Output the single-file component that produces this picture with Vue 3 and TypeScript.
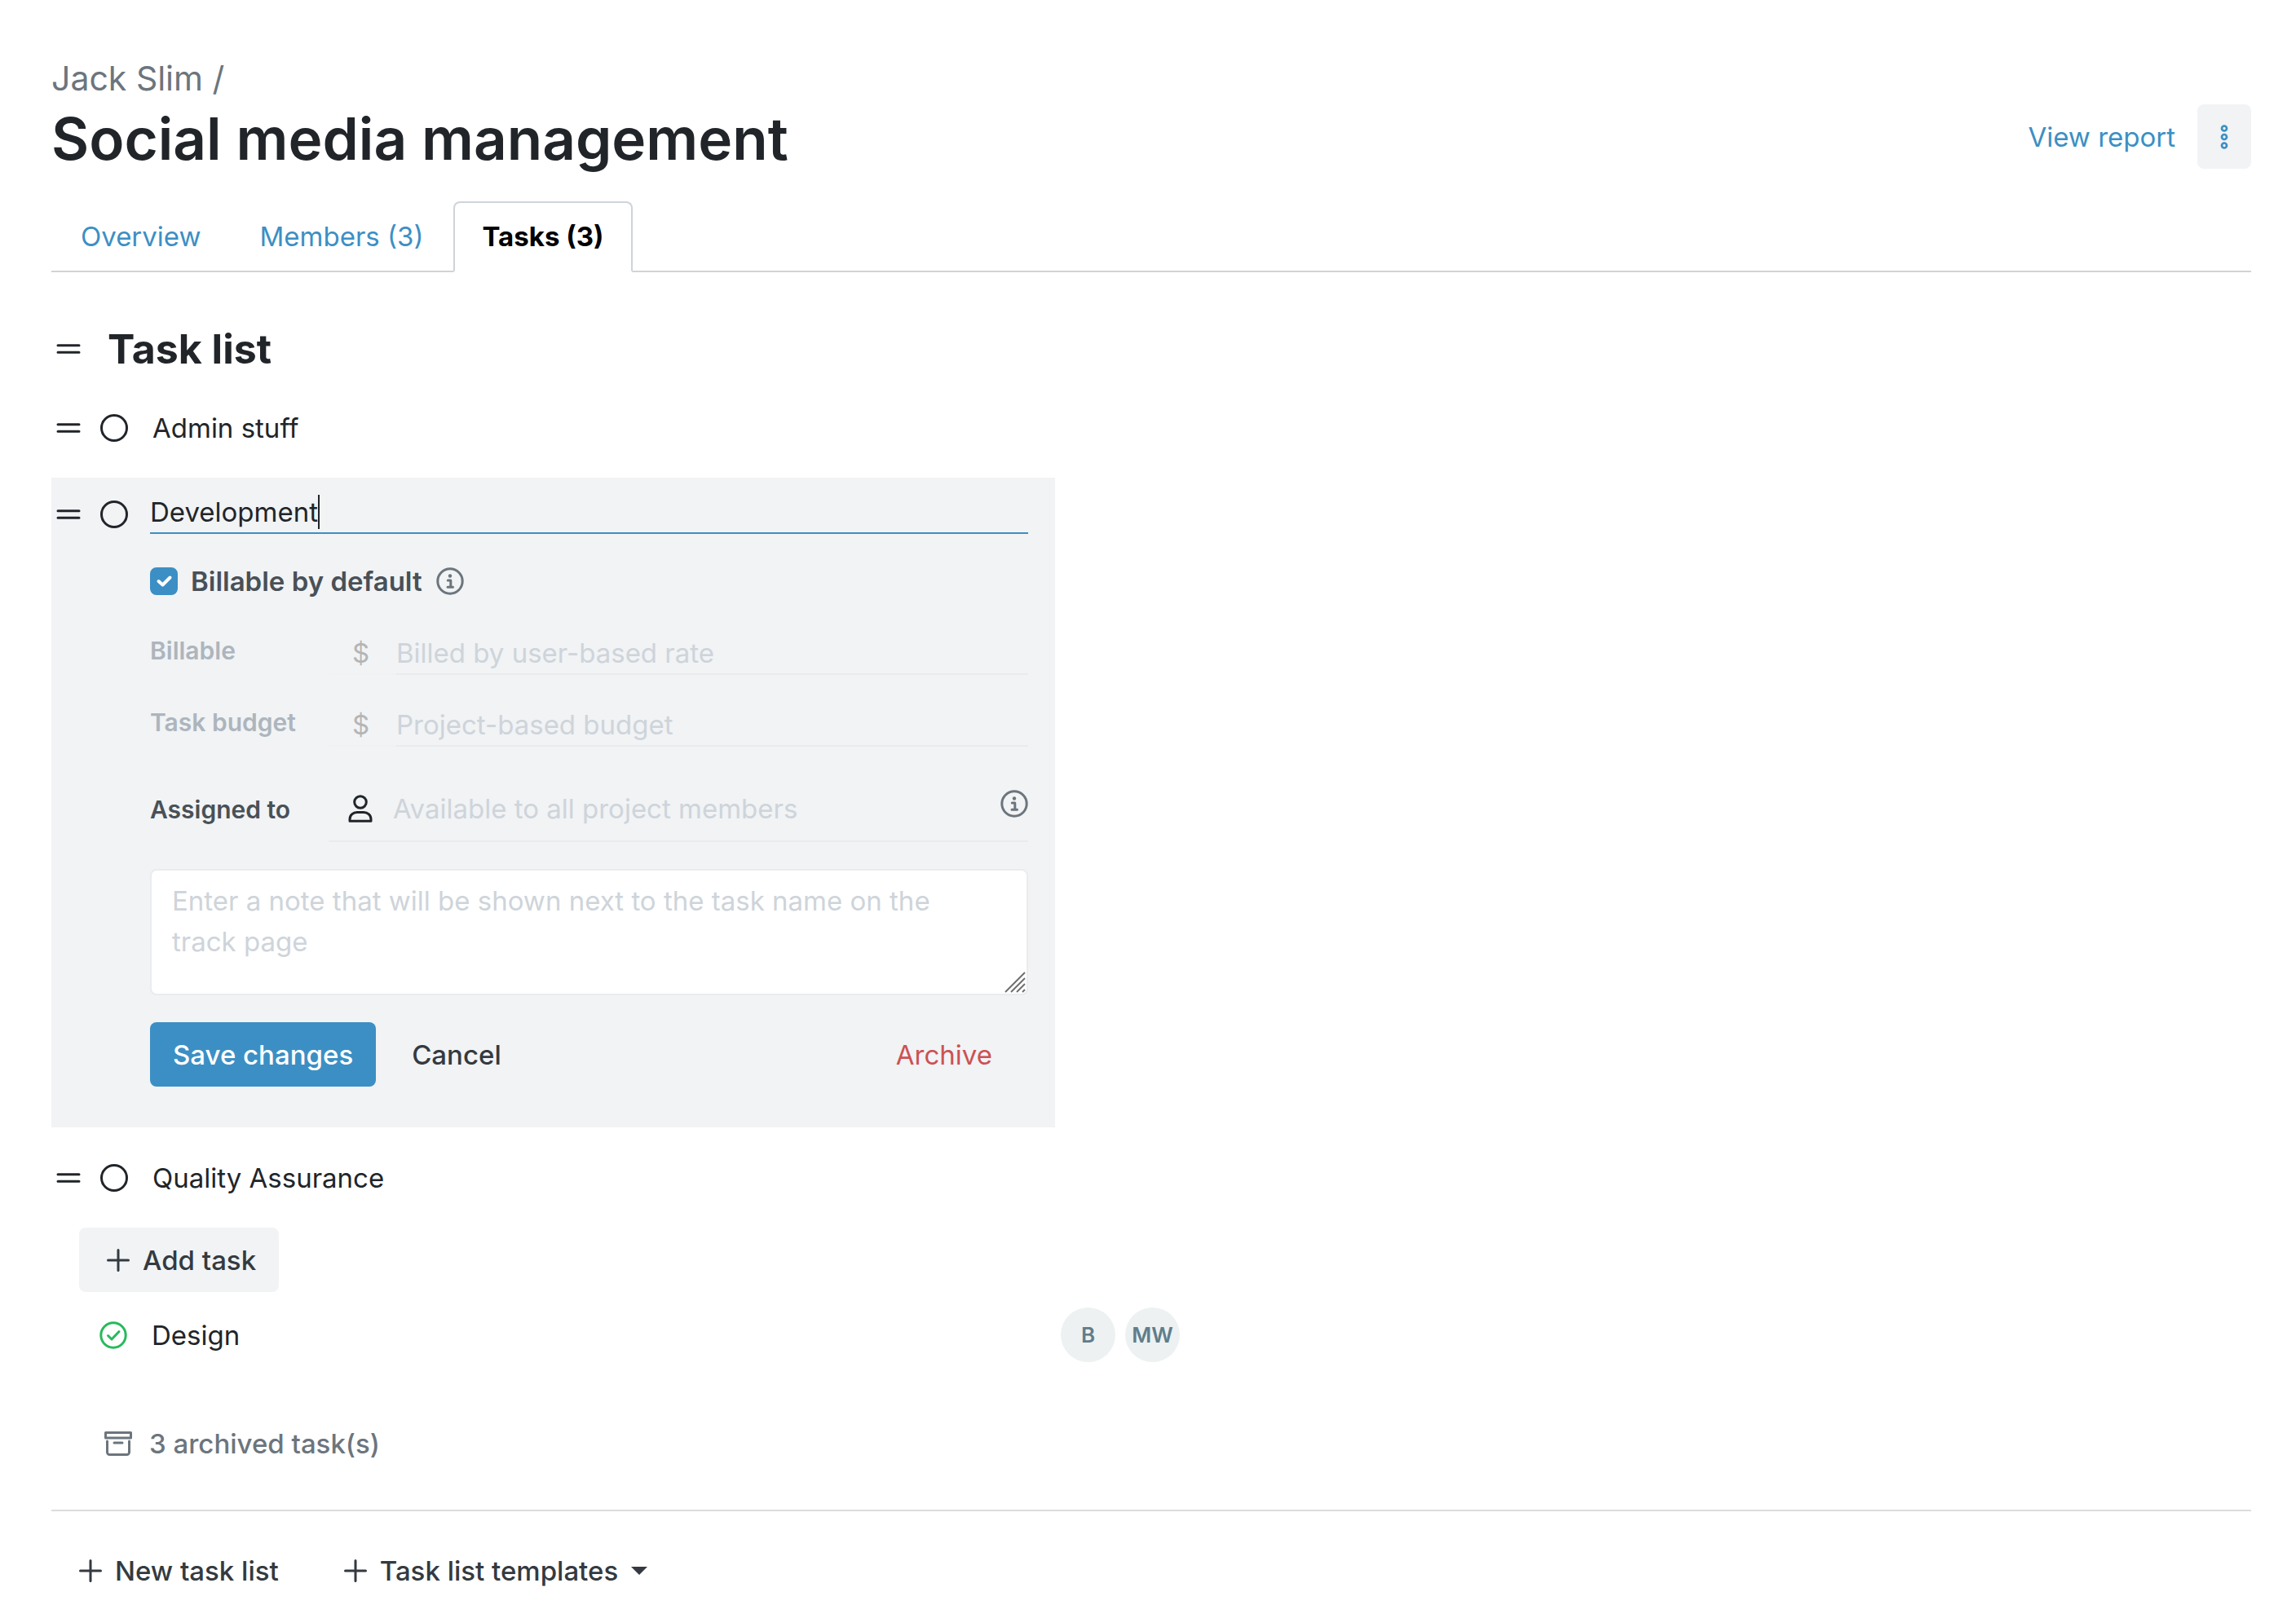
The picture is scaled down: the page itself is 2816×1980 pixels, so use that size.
<script setup lang="ts">
import { ref } from 'vue'

interface Tab {
  id: string
  label: string
}

interface Budget {
  id: string
  label: string
  placeholder: string
}

const tabs: Tab[] = [
  { id: 'overview', label: 'Overview' },
  { id: 'members', label: 'Members (3)' },
  { id: 'tasks', label: 'Tasks (3)' },
]
const activeTab = ref('tasks')

const budgets: Budget[] = [
  { id: 'billable', label: 'Billable', placeholder: 'Billed by user-based rate' },
  { id: 'budget', label: 'Task budget', placeholder: 'Project-based budget' },
]

const taskName = ref('Development')
const billable = ref(true)
const note = ref('')
const assignee = ref('')
const members: string[] = ['B', 'MW']
</script>

<template>
  <main class="page">
    <header class="header">
      <a href="#" class="crumb">Jack Slim /</a>
      <div class="title-row">
        <h1>Social media management</h1>
        <div class="header-actions">
          <a href="#">View report</a>
          <button type="button" class="more" aria-label="More actions">
            <svg width="10" height="30" viewBox="0 0 10 30" fill="none" stroke="currentColor" stroke-width="2.700">
              <circle cx="5" cy="4.500" r="3" />
              <circle cx="5" cy="15" r="3" />
              <circle cx="5" cy="25.500" r="3" />
            </svg>
          </button>
        </div>
      </div>
    </header>

    <nav class="tabs">
      <a
        v-for="tab in tabs"
        :key="tab.id"
        href="#"
        class="tab"
        :class="{ active: tab.id === activeTab }"
        @click.prevent="activeTab = tab.id"
      >{{ tab.label }}</a>
    </nav>

    <section class="list">
      <div class="list-head">
        <button type="button" class="icon-btn" aria-label="Move list">
          <svg width="30" height="14" viewBox="0 0 30 14" stroke="currentColor" stroke-width="3" stroke-linecap="round">
            <path d="M2 2.8h26M2 11.2h26" />
          </svg>
        </button>
        <h2>Task list</h2>
      </div>

      <div class="task">
        <button type="button" class="icon-btn" aria-label="Move task">
          <svg width="30" height="14" viewBox="0 0 30 14" stroke="currentColor" stroke-width="3" stroke-linecap="round">
            <path d="M2 2.8h26M2 11.2h26" />
          </svg>
        </button>
        <button type="button" class="icon-btn ring" aria-label="Complete Admin stuff"></button>
        <span class="task-name">Admin stuff</span>
      </div>

      <form class="editor" @submit.prevent>
        <div class="editor-icons">
          <button type="button" class="icon-btn" aria-label="Move task">
            <svg width="30" height="14" viewBox="0 0 30 14" stroke="currentColor" stroke-width="3" stroke-linecap="round">
              <path d="M2 2.8h26M2 11.2h26" />
            </svg>
          </button>
          <button type="button" class="icon-btn ring" aria-label="Complete Development"></button>
        </div>

        <div class="fields">
          <label class="name-field">
            <input v-model="taskName" type="text" aria-label="Task name" />
            <span class="caret"></span>
          </label>

          <div class="default-row">
            <label class="check-label">
              <span class="check">
                <input v-model="billable" type="checkbox" />
                <svg v-if="billable" width="34" height="34" viewBox="0 0 34 34" fill="none" stroke="#fff" stroke-width="4" stroke-linecap="round" stroke-linejoin="round">
                  <path d="M10.500 17l5 4.500l9-9" />
                </svg>
              </span>
              Billable by default
            </label>
            <svg class="info" width="34" height="34" viewBox="0 0 34 34" fill="none" stroke="currentColor" stroke-width="3">
              <circle cx="17" cy="17" r="15.200" />
              <circle cx="17" cy="10.500" r="2.200" fill="currentColor" stroke="none" />
              <path d="M14.300 16h3.500v8M14 24.200h6.500" stroke-linecap="round" stroke-linejoin="round" />
            </svg>
          </div>

          <div v-for="b in budgets" :key="b.id" class="budget">
            <label :for="b.id">{{ b.label }}</label>
            <span class="currency">$</span>
            <input :id="b.id" type="text" :placeholder="b.placeholder" disabled />
          </div>

          <div class="assign">
            <label for="assignee">Assigned to</label>
            <div class="assign-box">
              <svg width="30" height="34" viewBox="0 0 30 34" fill="none" stroke="currentColor" stroke-width="3" stroke-linejoin="round">
                <circle cx="15" cy="9" r="7.300" />
                <path d="M2 32.200V30C2 25 6 21.500 11 21.500h8c5 0 9 3.500 9 8.500v2.200z" />
              </svg>
              <input id="assignee" v-model="assignee" type="text" placeholder="Available to all project members" />
              <svg class="info" width="34" height="34" viewBox="0 0 34 34" fill="none" stroke="currentColor" stroke-width="3">
                <circle cx="17" cy="17" r="15.200" />
                <circle cx="17" cy="10.500" r="2.200" fill="currentColor" stroke="none" />
                <path d="M14.300 16h3.500v8M14 24.200h6.500" stroke-linecap="round" stroke-linejoin="round" />
              </svg>
            </div>
          </div>

          <div class="note">
            <textarea
              v-model="note"
              aria-label="Note"
              placeholder="Enter a note that will be shown next to the task name on the track page"
            ></textarea>
            <svg class="grip" width="26" height="26" viewBox="0 0 26 26" stroke="#6f6f6f" stroke-width="2">
              <path d="M1 25L25 1M8 25L25 8M15 25L25 15M22 25L25 22" />
            </svg>
          </div>

          <div class="buttons">
            <button type="submit" class="btn primary">Save changes</button>
            <button type="button" class="btn">Cancel</button>
            <button type="button" class="btn danger">Archive</button>
          </div>
        </div>
      </form>

      <div class="task">
        <button type="button" class="icon-btn" aria-label="Move task">
          <svg width="30" height="14" viewBox="0 0 30 14" stroke="currentColor" stroke-width="3" stroke-linecap="round">
            <path d="M2 2.8h26M2 11.2h26" />
          </svg>
        </button>
        <button type="button" class="icon-btn ring" aria-label="Complete Quality Assurance"></button>
        <span class="task-name">Quality Assurance</span>
      </div>

      <button type="button" class="btn add">
        <svg class="plus" width="28" height="28" viewBox="0 0 28 28" stroke="currentColor" stroke-width="3" stroke-linecap="round">
          <path d="M14 1.500v25M1.500 14h25" />
        </svg>
        Add task
      </button>

      <div class="done">
        <div class="done-task">
          <button type="button" class="icon-btn" aria-label="Reopen Design">
            <svg width="34" height="34" viewBox="0 0 34 34" fill="none" stroke="#28b95c" stroke-width="3" stroke-linecap="round" stroke-linejoin="round">
              <circle cx="17" cy="17" r="15.200" />
              <path d="M10.500 17.500l4.500 4.500l9-9.500" />
            </svg>
          </button>
          <span class="task-name">Design</span>
        </div>
        <div class="members">
          <span v-for="m in members" :key="m" class="avatar">{{ m }}</span>
        </div>
      </div>

      <button type="button" class="archived">
        <svg width="34" height="30" viewBox="0 0 34 30" fill="none" stroke="currentColor" stroke-width="3" stroke-linejoin="round">
          <path d="M1.500 1.500h31v6.500h-31z" />
          <path d="M3.500 12v13.500a3 3 0 0 0 3 3h21a3 3 0 0 0 3-3V12M12 14h10" stroke-linecap="round" />
        </svg>
        3 archived task(s)
      </button>
    </section>

    <footer class="footer">
      <button type="button" class="foot-btn">
        <svg class="plus" width="28" height="28" viewBox="0 0 28 28" stroke="currentColor" stroke-width="3" stroke-linecap="round">
          <path d="M14 1.500v25M1.500 14h25" />
        </svg>
        New task list
      </button>
      <button type="button" class="foot-btn">
        <svg class="plus" width="28" height="28" viewBox="0 0 28 28" stroke="currentColor" stroke-width="3" stroke-linecap="round">
          <path d="M14 1.500v25M1.500 14h25" />
        </svg>
        Task list templates
        <svg width="20" height="10" viewBox="0 0 20 10" fill="currentColor">
          <path d="M0 0h20L10 10z" />
        </svg>
      </button>
    </footer>
  </main>
</template>

<style>
body {
  background: #fff;
}
</style>

<style scoped>
* {
  box-sizing: border-box;
}

.page {
  padding: 65px 55px 14px 63px;
  font-family: Inter, 'Liberation Sans', sans-serif;
  font-size: 33px;
  line-height: 50px;
  color: #212529;
}

button,
input,
textarea {
  margin: 0;
  padding: 0;
  border: 0;
  background: none;
  font: inherit;
  color: inherit;
  outline: none;
}

svg {
  display: block;
  flex: none;
}

a {
  color: #3c8fc4;
  text-decoration: none;
}

h1,
h2 {
  margin: 0;
}

.crumb {
  display: block;
  font-size: 41px;
  line-height: 63px;
  color: #6c757d;
}

.title-row {
  display: flex;
  justify-content: space-between;
  align-items: flex-start;
}

h1 {
  font-size: 71px;
  line-height: 84px;
  font-weight: 600;
}

.header-actions {
  display: flex;
  align-items: center;
  gap: 27px;
}

.more {
  display: grid;
  place-items: center;
  width: 66px;
  height: 79px;
  border-radius: 8px;
  background: #f1f3f5;
  color: #3c8fc4;
}

.tabs {
  display: flex;
  margin-top: 35px;
  border-bottom: 2px solid #ced4da;
}

.tab {
  height: 87px;
  margin-bottom: -2px;
  padding: 16px 34px 0;
  border: 2px solid transparent;
  border-radius: 8px 8px 0 0;
}

.tab.active {
  border-color: #ced4da #ced4da #fff;
  background: #fff;
  color: #000;
  font-weight: 700;
}

.list-head {
  display: flex;
  align-items: center;
  height: 70px;
  margin-top: 59px;
  padding-left: 6px;
  gap: 33px;
}

h2 {
  font-size: 50px;
  line-height: 70px;
  font-weight: 700;
}

.icon-btn {
  display: block;
  flex: none;
}

.ring {
  width: 34px;
  height: 34px;
  margin-left: 24px;
  border: 3px solid #212529;
  border-radius: 50%;
}

.task {
  display: flex;
  align-items: center;
  height: 123px;
  padding-left: 6px;
}

.task-name {
  margin-left: 30px;
}

.editor {
  display: flex;
  gap: 27px;
  max-width: 1231px;
  padding: 17px 33px 50px 6px;
  background: #f1f3f5;
}

.editor-icons {
  display: flex;
  align-items: center;
  height: 56px;
}

.fields {
  flex: 1;
  min-width: 0;
}

.name-field {
  display: flex;
  align-items: center;
  height: 52px;
  border-bottom: 2px solid #3c8fc4;
}

.name-field input {
  field-sizing: content;
  caret-color: transparent;
}

.caret {
  width: 2px;
  height: 42px;
  background: #212529;
}

.default-row {
  display: flex;
  align-items: center;
  gap: 17px;
  height: 50px;
  margin: 33px 0 38px;
  font-weight: 600;
  color: #495057;
}

.check-label {
  display: flex;
  align-items: center;
  gap: 16px;
}

.check {
  display: grid;
}

.check > * {
  grid-area: 1 / 1;
}

.check svg {
  pointer-events: none;
}

.check input {
  appearance: none;
  width: 34px;
  height: 34px;
  border: 2px solid #3c8fc4;
  border-radius: 8px;
}

.check input:checked {
  background: #3c8fc4;
}

.info {
  color: #6c757d;
}

.budget {
  display: flex;
  margin-bottom: 36px;
}

.budget label,
.assign label {
  flex: none;
  width: 219px;
  font-size: 30px;
  line-height: 44px;
  font-weight: 600;
  color: #adb5bd;
}

.currency {
  width: 83px;
  border-bottom: 2px solid #eff1f2;
  color: #b5b5b5;
  text-align: center;
  padding-right: 4px;
}

.budget input {
  flex: 1;
  min-width: 0;
  height: 52px;
  border-bottom: 2px solid #e9ecef;
}

::placeholder {
  color: #ced4da;
  opacity: 1;
}

.assign {
  display: flex;
  align-items: center;
}

.assign label {
  color: #495057;
}

.assign-box {
  display: flex;
  flex: 1;
  align-items: center;
  height: 81px;
  padding-left: 24px;
  border-bottom: 2px solid #e9ecef;
}

.assign-box input {
  flex: 1;
  min-width: 0;
  margin-left: 25px;
}

.assign-box .info {
  align-self: flex-start;
  margin-top: 17px;
}

.note {
  position: relative;
  margin-top: 33px;
}

textarea {
  display: block;
  width: 100%;
  height: 155px;
  padding: 12px 60px 12px 25px;
  border: 2px solid #e9ecef;
  border-radius: 8px;
  background: #fff;
  resize: none;
}

.grip {
  position: absolute;
  right: 3px;
  bottom: 3px;
  pointer-events: none;
}

.buttons {
  display: flex;
  gap: 16px;
  margin-top: 33px;
  padding-right: 16px;
}

.btn {
  height: 79px;
  padding: 0 28px;
  border-radius: 8px;
  font-weight: 500;
  color: #343a40;
}

.btn.primary {
  background: #3c8fc4;
  color: #fff;
}

.btn.danger {
  margin-left: auto;
  font-weight: 400;
  color: #cc5252;
}

.btn.add {
  display: flex;
  align-items: center;
  gap: 16px;
  margin-left: 34px;
  padding-left: 34px;
  background: #f1f3f5;
}

.done {
  display: grid;
  grid-template-columns: minmax(0, 1238px) auto 1fr;
  align-items: center;
  margin-top: 19px;
}

.done-task {
  display: flex;
  align-items: center;
  padding-left: 59px;
}

.members {
  display: flex;
  gap: 12px;
}

.avatar {
  width: 67px;
  height: 67px;
  border-radius: 50%;
  background: #edf1f2;
  color: #607d8b;
  font-size: 26px;
  line-height: 67px;
  font-weight: 600;
  text-align: center;
}

.archived {
  display: flex;
  align-items: center;
  gap: 21px;
  margin: 75px 0 56px 65px;
  font-weight: 500;
  color: #6c757d;
}

.footer {
  display: flex;
  gap: 80px;
  padding: 33px 34px 0;
  border-top: 2px solid #dcdcdc;
}

.foot-btn {
  display: flex;
  align-items: center;
  gap: 16px;
  height: 79px;
  font-weight: 500;
  color: #343a40;
}
</style>
